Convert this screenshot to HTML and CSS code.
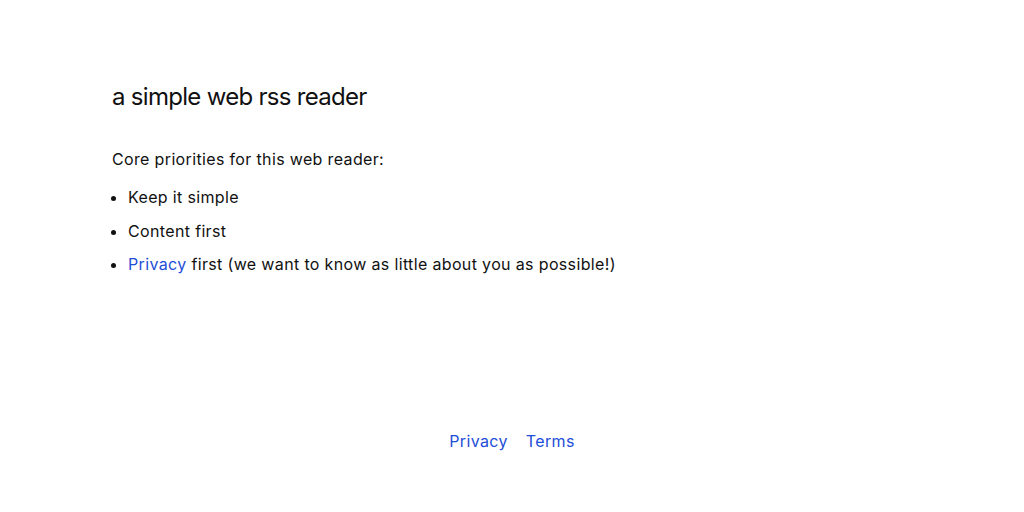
FILE: index.html
```html
<!DOCTYPE html>
<html>
<head>
    <title>a simple web rss reader</title>
    <link rel="stylesheet" href="styles.css">
</head>
<body>
    <main class="content">
        <h1 class="title">a simple web rss reader</h1>
        <p class="intro">Core priorities for this web reader:</p>
        <ul class="priorities">
            <li>Keep it simple</li>
            <li>Content first</li>
            <li><a href="#privacy">Privacy</a> first (we want to know as little about you as possible!)</li>
        </ul>
    </main>

    <footer class="footer">
        <a href="#privacy">Privacy</a>
        <a href="#terms">Terms</a>
    </footer>
</body>
</html>
```

FILE: styles.css
```css
body {
    font-family: Inter, "Liberation Sans", sans-serif;
    margin: 0;
    color: #111;
    font-size: 16px;
    letter-spacing: 0.35px;
}
a {
    color: #1d4ed8;
    text-decoration: none;
}
.content {
    max-width: 800px;
    margin: 0 auto;
    padding-top: 81px;
    height: 348px;
}
.title {
    font-size: 24px;
    font-weight: 400;
    letter-spacing: -0.7px;
    margin: 0 0 34px;
    line-height: 32px;
}
.intro {
    margin: 0 0 14px;
    line-height: 24px;
}
.priorities {
    margin: 0;
    padding-left: 16px;
}
.priorities li {
    line-height: 24px;
    margin-bottom: 9.5px;
}
.footer {
    display: flex;
    justify-content: center;
    gap: 18px;
    line-height: 24px;
}
```
